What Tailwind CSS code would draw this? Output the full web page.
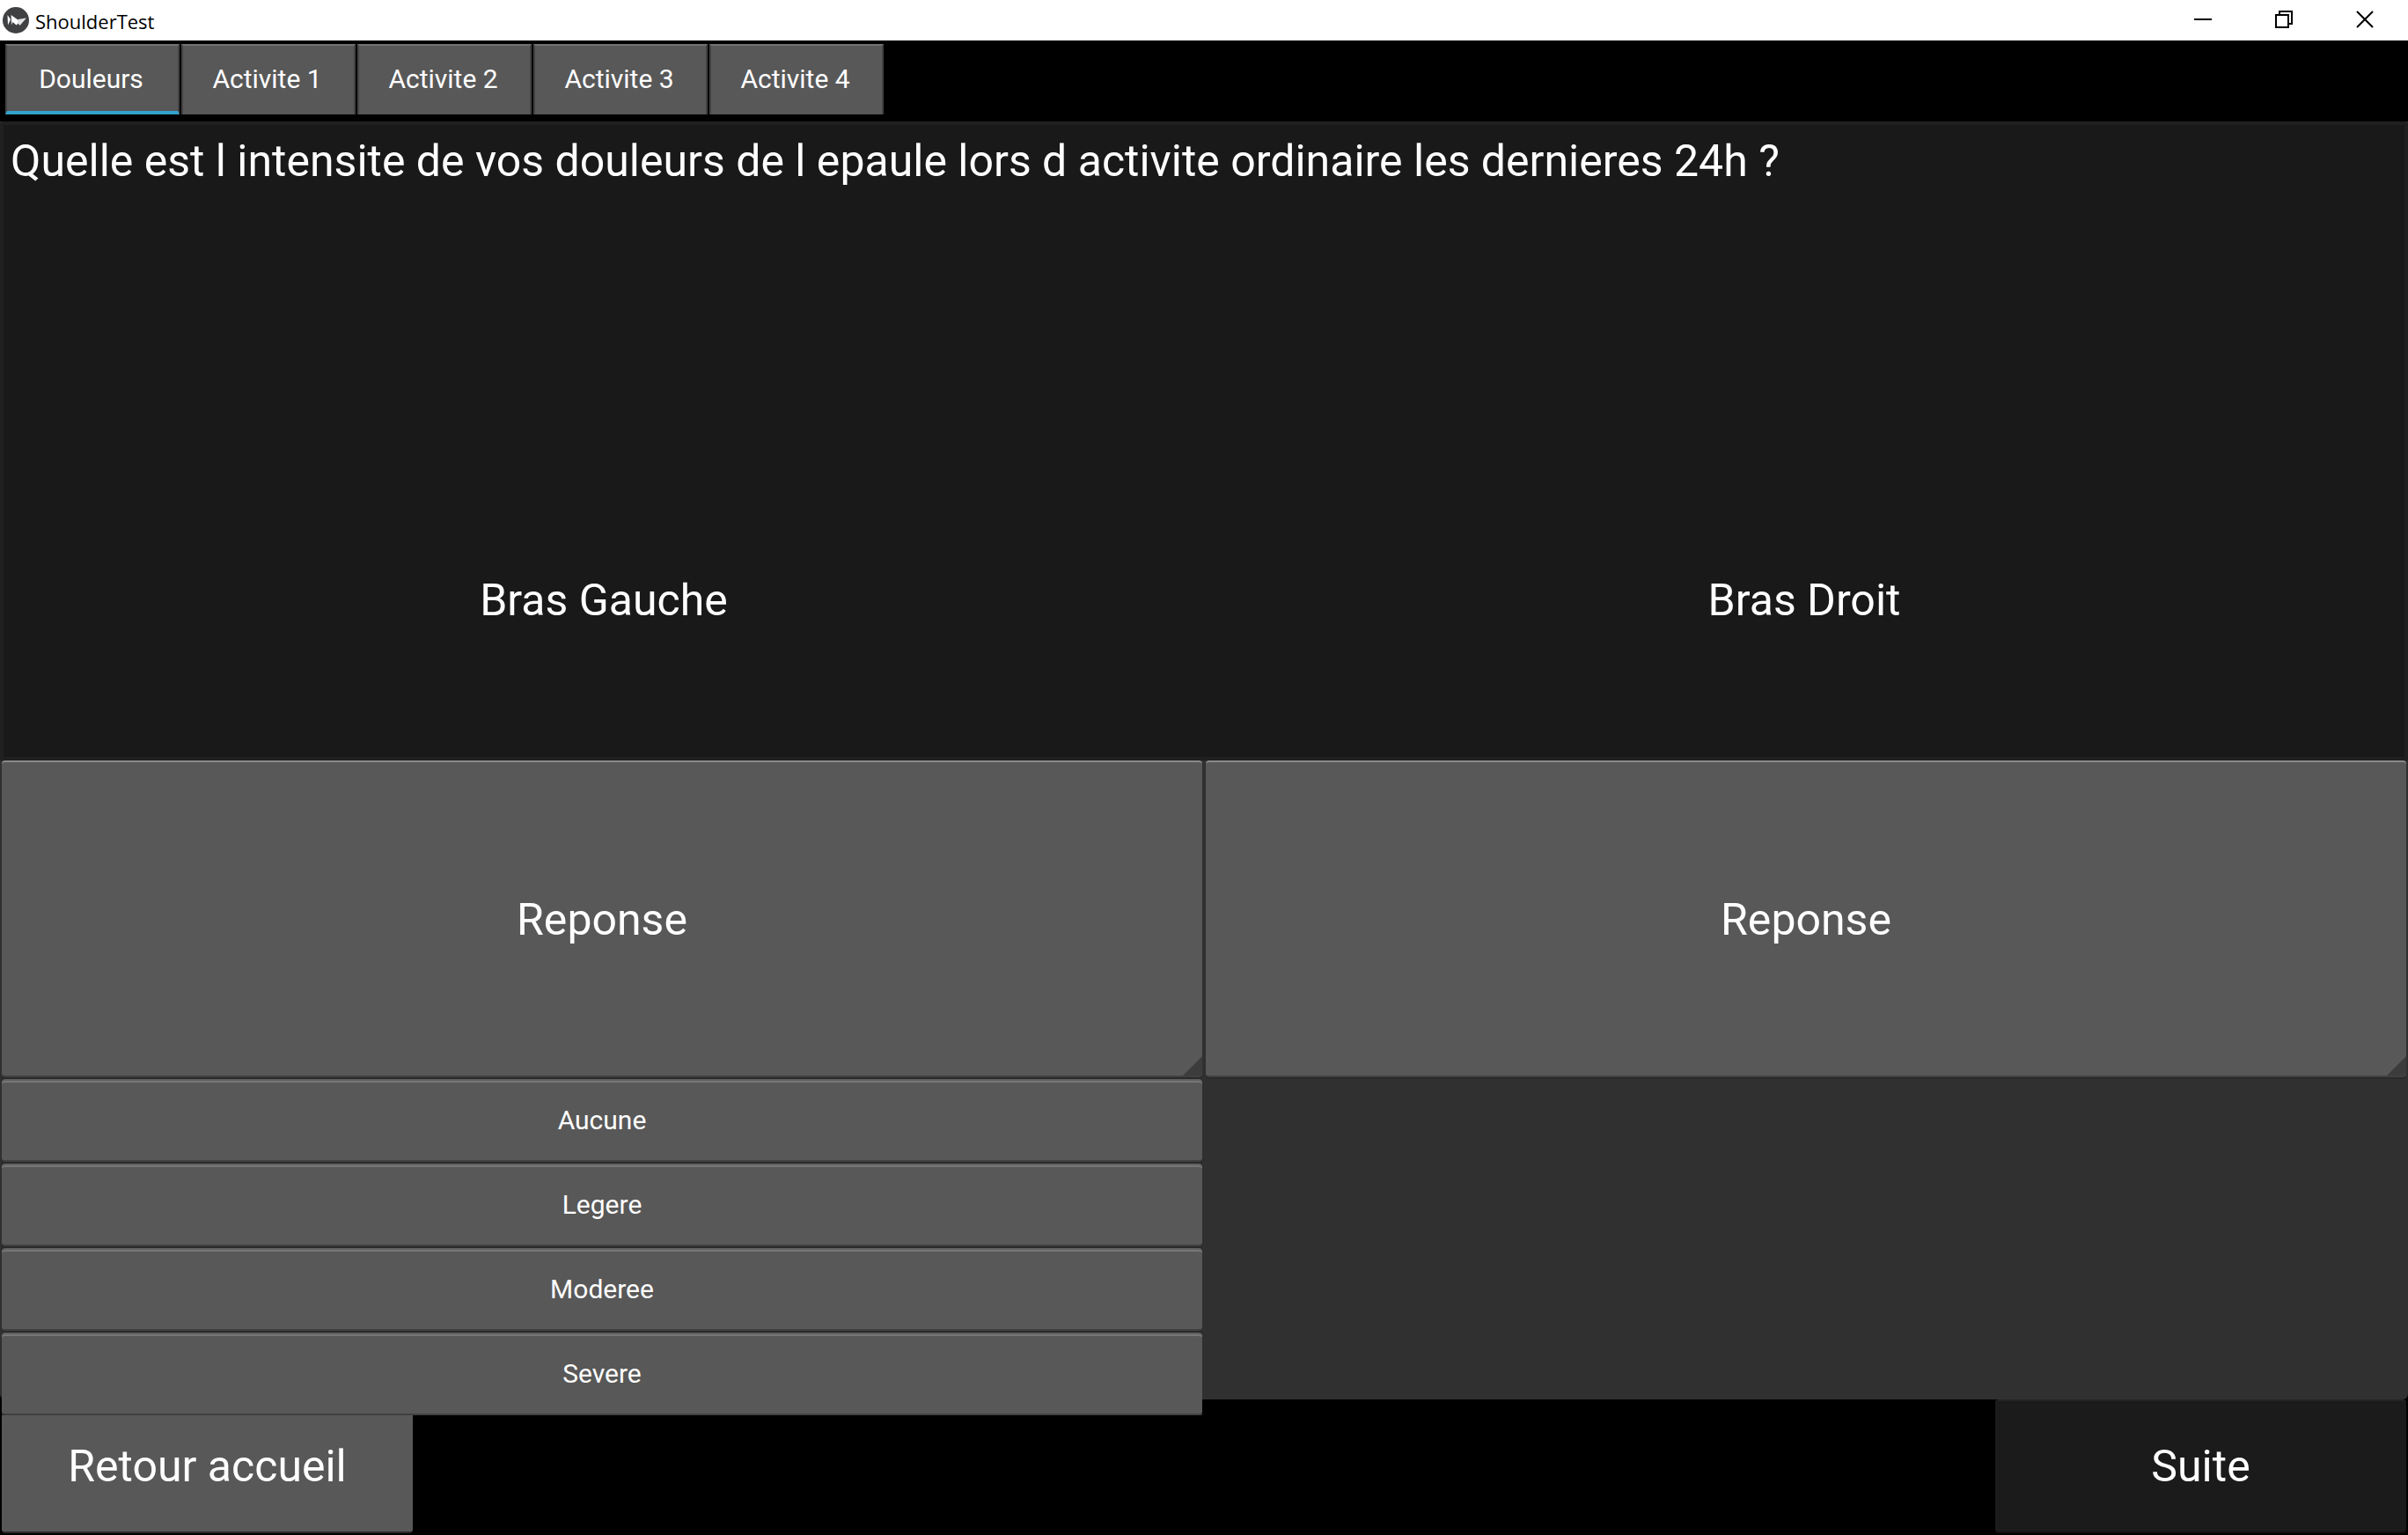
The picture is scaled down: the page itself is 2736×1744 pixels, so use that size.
<!DOCTYPE html>
<html lang="fr">
<head>
<meta charset="utf-8">
<title>ShoulderTest</title>
<script src="https://cdn.jsdelivr.net/npm/@tailwindcss/browser@4"></script>
</head>
<body class="flex min-h-screen flex-col bg-black font-[Roboto,sans-serif] text-white">
  <header class="flex h-[46px] items-center bg-white text-black">
    <svg class="ml-[3px] size-[30px]" viewBox="0 0 30 30" aria-hidden="true">
      <circle cx="15" cy="15" r="15" fill="#3f4143"/>
      <path d="M5.5 9l3.5 5-3 6.500z" fill="#fff"/>
      <path d="M9.500 9l8.500 6 1.500 2-4 3.500-4-3.500-1 3z" fill="#fff"/>
      <path d="M17.500 14l9.500-1.500-7.500 8.500-2.500-3z" fill="#e2e2e2"/>
      <path d="M9.500 14.500l2 2.500-1.500 3z" fill="#ccc"/>
    </svg>
    <h1 class="ml-[7px] pt-[2px] font-['Open_Sans',sans-serif] text-[22px] leading-8">ShoulderTest</h1>
    <div class="mr-[3px] ml-auto flex h-full pb-[2px]">
      <button class="flex w-[92px] items-center justify-center" aria-label="Réduire"><svg class="size-5" viewBox="0 0 20 20"><path d="M0 9h20v2H0z"/></svg></button>
      <button class="flex w-[92px] items-center justify-center" aria-label="Restaurer"><svg class="size-5" viewBox="0 0 20 20" fill="none" stroke="#000" stroke-width="2"><path d="M1 5h14v14H1zM5 5V1h14v14h-4"/></svg></button>
      <button class="flex w-[92px] items-center justify-center" aria-label="Fermer"><svg class="size-5" viewBox="0 0 20 20" fill="none" stroke="#000" stroke-width="2"><path d="M1 1l18 18M19 1L1 19"/></svg></button>
    </div>
  </header>

  <nav class="flex h-[92px] gap-[2px] px-[6px] pt-1 pb-2 text-[30px] leading-9" role="tablist">
    <button role="tab" aria-selected="true" class="w-[198px] border-x-2 border-t-2 border-b-4 border-x-[#424242] border-t-[#727272] border-b-[#33a3cf] bg-[#585858] pt-[2px] pr-[3px]">Douleurs</button>
    <button role="tab" class="w-[198px] border-x-2 border-t-2 border-x-[#424242] border-t-[#727272] bg-[#585858] pr-[3px] pb-[2px]">Activite 1</button>
    <button role="tab" class="w-[198px] border-x-2 border-t-2 border-x-[#424242] border-t-[#727272] bg-[#585858] pr-[3px] pb-[2px]">Activite 2</button>
    <button role="tab" class="w-[198px] border-x-2 border-t-2 border-x-[#424242] border-t-[#727272] bg-[#585858] pr-[3px] pb-[2px]">Activite 3</button>
    <button role="tab" class="w-[198px] border-x-2 border-t-2 border-x-[#424242] border-t-[#727272] bg-[#585858] pr-[3px] pb-[2px]">Activite 4</button>
  </nav>

  <main class="grid flex-1 grid-rows-2 rounded-b-md bg-[#303030] text-[50px] leading-[60px]">
    <section class="grid grid-rows-2 rounded-t-sm border-4 border-[#202020] bg-[#191919]">
      <h2 class="px-2 pt-[11px]">Quelle est l intensite de vos douleurs de l epaule lors d activite ordinaire les dernieres 24h ?</h2>
      <div class="grid grid-cols-2 items-center pt-[2px] text-center">
        <p>Bras Gauche</p>
        <p>Bras Droit</p>
      </div>
    </section>
    <section class="grid grid-cols-2 grid-rows-2">
      <div class="relative px-[2px] pb-[3px]">
        <button aria-expanded="true" class="relative block h-full w-full overflow-hidden rounded-sm border-t-2 border-b-2 border-t-[#8a8a8a] border-b-[#404040] bg-[#585858] pt-[2px] shadow-[0_2px_0_#2a2a2a]">Reponse
          <svg class="absolute right-0 bottom-0 size-[22px]" viewBox="0 0 22 22" aria-hidden="true"><path d="M22 0v22H0z" fill="#3c3c3c"/></svg>
        </button>
        <div role="listbox" class="absolute inset-x-[2px] top-full z-10 -mt-px flex flex-col gap-[2px] bg-[#2a2a2a] text-[30px] leading-9">
          <button role="option" class="h-[94px] rounded-sm border-t-2 border-b-2 border-t-[#616161] border-b-[#404040] bg-[#585858] shadow-[inset_0_2px_0_#777777]">Aucune</button>
          <button role="option" class="h-[94px] rounded-sm border-t-2 border-b-2 border-t-[#616161] border-b-[#404040] bg-[#585858] shadow-[inset_0_2px_0_#777777]">Legere</button>
          <button role="option" class="h-[94px] rounded-sm border-t-2 border-b-2 border-t-[#616161] border-b-[#404040] bg-[#585858] shadow-[inset_0_2px_0_#777777]">Moderee</button>
          <button role="option" class="h-[94px] rounded-sm border-t-2 border-b-2 border-t-[#616161] border-b-[#404040] bg-[#585858] shadow-[inset_0_2px_0_#777777]">Severe</button>
        </div>
      </div>
      <div class="px-[2px] pb-[3px]">
        <button aria-expanded="false" class="relative block h-full w-full overflow-hidden rounded-sm border-t-2 border-b-2 border-t-[#8a8a8a] border-b-[#404040] bg-[#585858] pt-[2px] shadow-[0_2px_0_#2a2a2a]">Reponse
          <svg class="absolute right-0 bottom-0 size-[22px]" viewBox="0 0 22 22" aria-hidden="true"><path d="M22 0v22H0z" fill="#3c3c3c"/></svg>
        </button>
      </div>
    </section>
  </main>

  <footer class="flex h-[154px] justify-between px-[2px] pb-[2px] text-[50px] leading-[60px]">
    <button class="w-[467px] rounded-sm border-t-2 border-b-2 border-t-[#8a8a8a] border-b-[#2a2a2a] bg-[#585858]">Retour accueil</button>
    <button disabled class="w-[467px] rounded-sm border-t-2 border-b-2 border-t-[#232323] border-b-[#111111] bg-[#1b1b1b]">Suite</button>
  </footer>
</body>
</html>
